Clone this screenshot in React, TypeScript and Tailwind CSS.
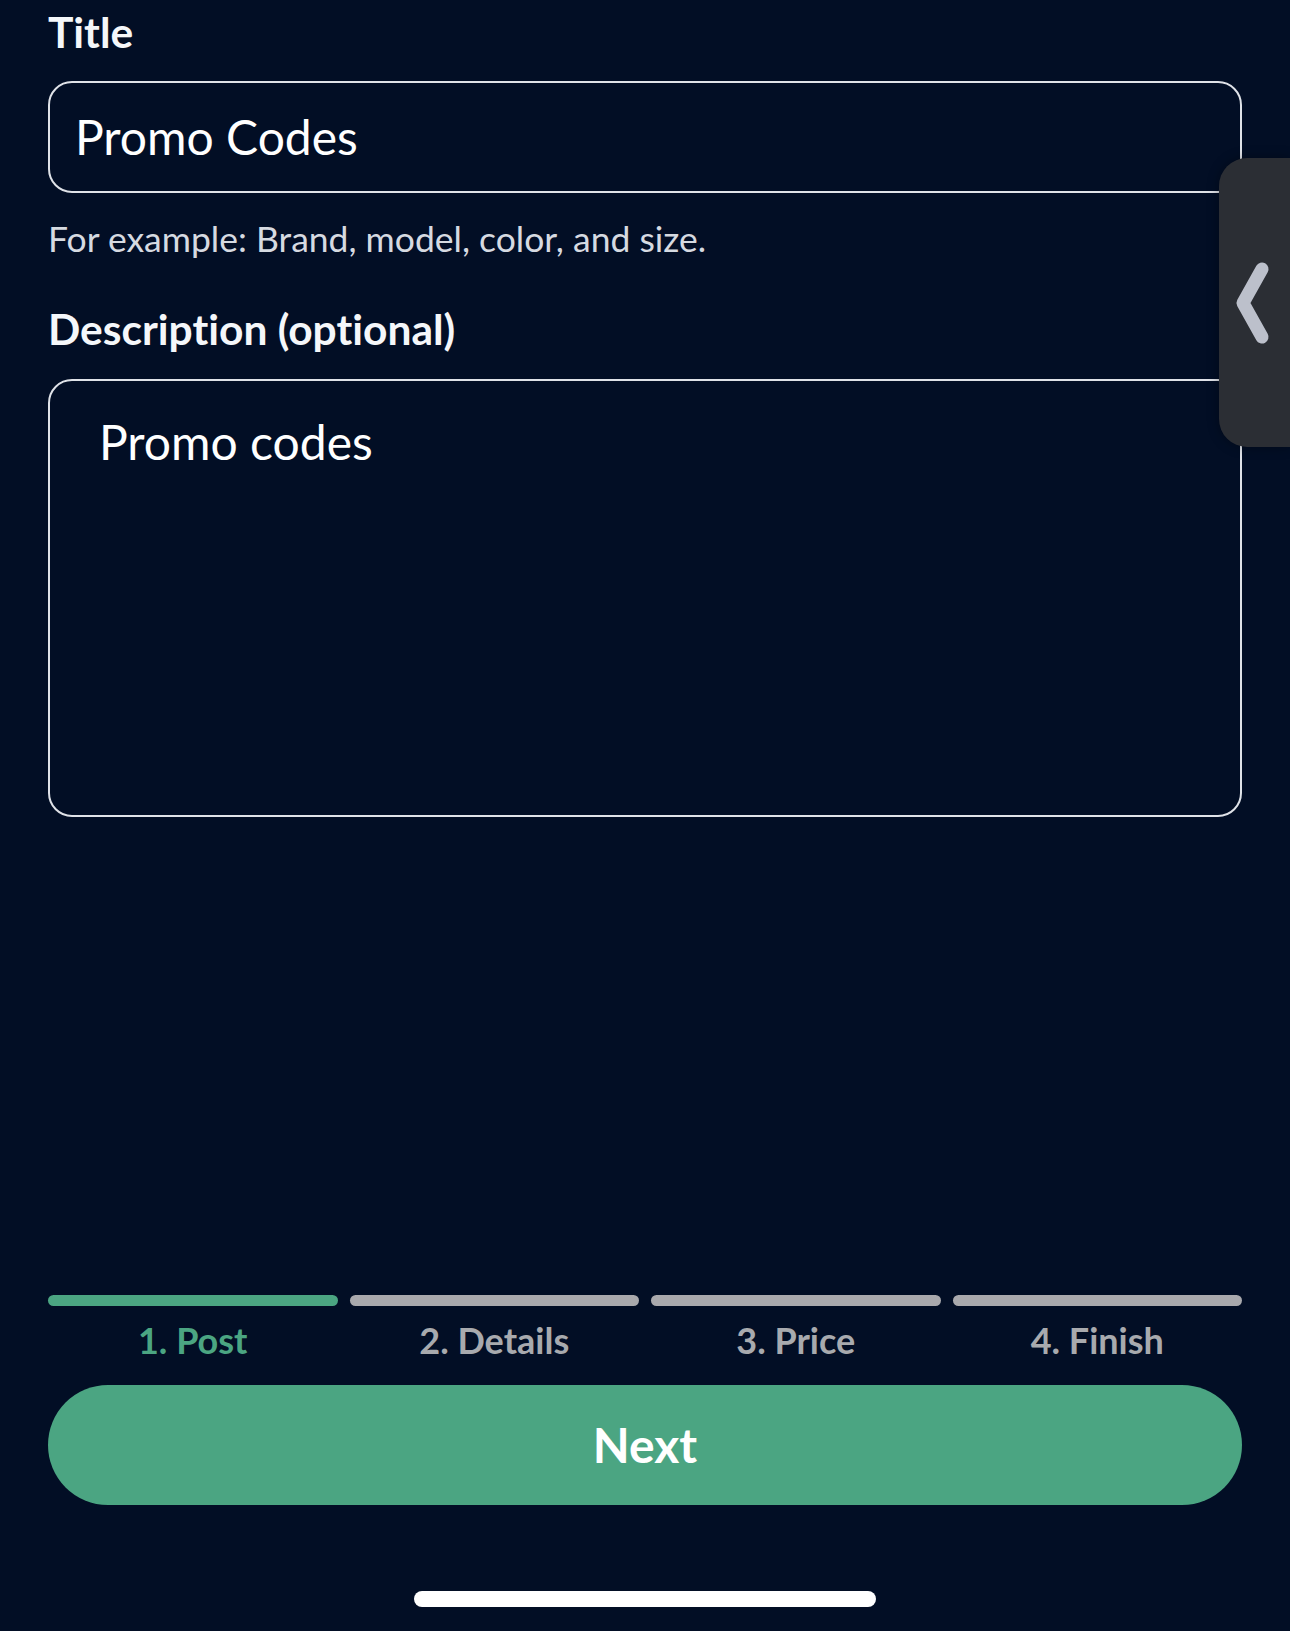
import { useState } from 'react'

const steps = ['1. Post', '2. Details', '3. Price', '4. Finish']

function SideTab() {
  return (
    <div className="absolute right-0 top-[158px] h-[289px] w-[71px] rounded-l-[28px] bg-[#2b2e34] shadow-[0_0_12px_rgba(0,0,0,0.35)]">
      <svg width="71" height="289" viewBox="0 0 71 289" fill="none" className="block">
        <polyline
          points="43,111 24,145 43,179"
          stroke="#bcc0cb"
          strokeWidth="13"
          strokeLinecap="round"
          strokeLinejoin="round"
        />
      </svg>
    </div>
  )
}

export default function App() {
  const [title, setTitle] = useState('Promo Codes')
  const [desc, setDesc] = useState('Promo codes')
  const active = 0

  return (
    <div className="relative flex min-h-screen flex-col overflow-hidden bg-[#020e25] px-[48px] font-[Lato,'Noto_Sans',sans-serif] text-white [font-feature-settings:'liga'_0,'clig'_0,'dlig'_0]">
      {/* Form */}
      <div className="flex flex-col pt-[7px]">
        <label className="text-[42.5px] font-bold leading-[50px] text-[#f5f7fa]">Title</label>
        <div className="mt-[24px] flex h-[112px] items-center rounded-[24px] border-[2.5px] border-[#dfe2e8] pl-[25px] pr-6">
          <input
            value={title}
            onChange={e => setTitle(e.target.value)}
            className="w-full bg-transparent text-[48px] leading-[58px] text-white outline-none"
          />
        </div>
        <p className="mt-[25px] text-[35.5px] leading-[42px] text-[#d6dae1]">
          For example: Brand, model, color, and size.
        </p>

        <label className="mt-[44px] text-[42.5px] font-bold leading-[50px] text-[#f5f7fa]">
          Description (optional)
        </label>
        <div className="mt-[25px] h-[438px] rounded-[24px] border-[2.5px] border-[#dfe2e8] pl-[49px] pr-8 pt-[32px]">
          <textarea
            value={desc}
            onChange={e => setDesc(e.target.value)}
            className="h-full w-full resize-none bg-transparent text-[48px] leading-[58px] text-white outline-none"
          />
        </div>
      </div>

      {/* Stepper + action */}
      <div className="mt-auto flex flex-col">
        <div className="grid grid-cols-4 gap-3">
          {steps.map((s, i) => (
            <div key={s} className="flex flex-col items-center">
              <div
                className={`h-[11px] w-full rounded-full ${i === active ? 'bg-[#4ba582]' : 'bg-[#a9a9ad]'}`}
              />
              <span
                className={`mt-[12px] text-[36px] font-bold leading-[45px] ${i === active ? 'text-[#4ba582]' : 'text-[#a8aaae]'}`}
              >
                {s}
              </span>
            </div>
          ))}
        </div>

        <button className="mt-[22px] flex h-[120px] w-full items-center justify-center rounded-full bg-[#4ba582] text-[48px] font-bold leading-[58px] text-white">
          Next
        </button>

        <div className="mx-auto mb-[24px] mt-[86px] h-[16px] w-[462px] rounded-full bg-white" />
      </div>

      <SideTab />
    </div>
  )
}
